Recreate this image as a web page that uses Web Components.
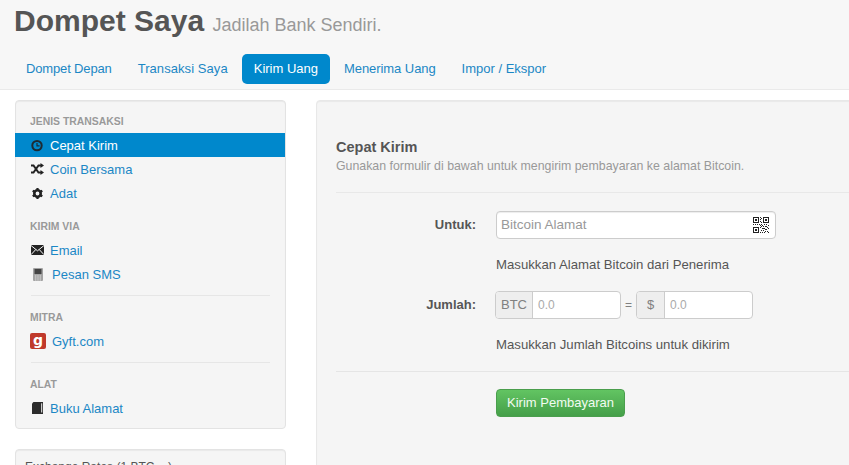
<!DOCTYPE html>
<html>
<head>
<meta charset="utf-8">
<title>Dompet Saya</title>
<style>
  html, body { margin: 0; height: 465px; overflow: hidden; background: #fff; }
  body { font: 14px/20px "Liberation Sans", Arial, sans-serif; color: #555; }
  .row { display: flex; gap: 30px; padding: 10px 0 0 15px; width: 1000px; }
</style>
</head>
<body>
<wallet-header title-text="Dompet Saya" tagline="Jadilah Bank Sendiri."></wallet-header>
<div class="row">
  <side-bar></side-bar>
  <send-form></send-form>
</div>

<script>
class WalletHeader extends HTMLElement {
  constructor() {
    super();
    this.attachShadow({ mode: 'open' });
    // second value is a small letter-spacing so the tabs land where the reference has them
    const tabs = [['Dompet Depan', -0.15], ['Transaksi Saya', 0.07], ['Kirim Uang', 0], ['Menerima Uang', -0.07], ['Impor / Ekspor', 0]];
    this.shadowRoot.innerHTML = `
      <style>
        :host { display: block; height: 89px; background: #f7f7f7; border-bottom: 1px solid #eaeaea; }
        h1 { margin: 0; padding: 0 0 0 14px; height: 54px; font-size: 30px; line-height: 42px; font-weight: bold; color: #555; white-space: nowrap; }
        small { font-size: 18px; font-weight: normal; color: #999; }
        nav { display: flex; gap: 2px; margin-left: 14px; }
        a { display: block; padding: 5px 12px; height: 20px; border-radius: 5px; color: #1b87c5; font-size: 13px; line-height: 20px; text-decoration: none; white-space: nowrap; }
        a.active { background: #0088cc; color: #fff; }
      </style>
      <h1>${this.getAttribute('title-text')} <small>${this.getAttribute('tagline')}</small></h1>
      <nav>${tabs.map(([t, s]) => `<a href="#" style="letter-spacing:${s}px" class="${t === 'Kirim Uang' ? 'active' : ''}">${t}</a>`).join('')}</nav>
    `;
  }
}
customElements.define('wallet-header', WalletHeader);

const ICONS = {
  clock: '<svg width="14" height="14" viewBox="0 0 14 14"><circle cx="6" cy="7.600" r="4.700" fill="none" stroke="#1d2a33" stroke-width="2"/><path d="M6 5v2.800h2.600" fill="none" stroke="#1d2a33" stroke-width="1.200"/></svg>',
  shuffle: '<svg width="14" height="14" viewBox="0 0 14 14"><path d="M0 3.500h2.500l5 7H10M0 10.500h2.500l5-7H10" fill="none" stroke="#222" stroke-width="2"/><path d="M9.500 1l3.500 2.500L9.500 6zM9.500 8l3.500 2.500L9.500 13z" fill="#222"/></svg>',
  cog: '<svg width="14" height="14" viewBox="0 0 14 14"><circle cx="6.500" cy="7.500" r="3.200" fill="none" stroke="#222" stroke-width="2.600"/><path d="M6.500 2v2M6.500 11v2M1.700 4.700l1.800 1M9.500 9.300l1.800 1M1.700 10.300l1.800-1M9.500 5.700l1.800-1" stroke="#222" stroke-width="2.200"/></svg>',
  mail: '<svg width="14" height="14" viewBox="0 0 14 14"><rect x="0" y="2" width="13" height="10" fill="#222"/><path d="M0 2.500l6.500 5.300L13 2.500M0 11.700l4.800-5.200M13 11.700L8.200 6.500" fill="none" stroke="#f5f5f5" stroke-width="1"/></svg>',
  phone: '<svg width="14" height="16" viewBox="0 0 14 16"><rect x="2" y="2" width="10" height="13" rx="1" fill="#a3a3a3"/><rect x="3.500" y="3" width="7" height="5" fill="#444"/><path d="M4 10h6M4 12h6M4 14h6" stroke="#dcdcdc" stroke-width="1" stroke-dasharray="1.400 .9"/></svg>',
  book: '<svg width="14" height="14" viewBox="0 0 14 14"><path d="M1 2.500 2.500 1H12V13H1z" fill="#2b2b2b"/><path d="M10.700 2.300V11.500" stroke="#eee" stroke-width="1"/></svg>'
};

class SideBar extends HTMLElement {
  constructor() {
    super();
    this.attachShadow({ mode: 'open' });
    this.shadowRoot.innerHTML = `
      <style>
        :host { display: block; width: 271px; flex: none; }
        .well { box-sizing: border-box; width: 271px; background: #f5f5f5; border: 1px solid #e3e3e3; border-radius: 4px; box-shadow: inset 0 1px 1px rgba(0,0,0,.05); }
        .nav { height: 329px; padding: 10px 0 0; }
        .head { padding: 4px 14px 0; height: 22px; font-size: 10.400px; line-height: 14px; font-weight: bold; color: #999; text-transform: uppercase; box-sizing: border-box; text-shadow: 0 1px 0 rgba(255,255,255,.5); }
        a { box-sizing: border-box; display: flex; align-items: center; height: 24px; padding: 2px 0 0 15px; color: #1b87c5; text-decoration: none; font-size: 13px; line-height: 20px; }
        a svg { flex: none; margin: -2px 5px 0 0; }
        a.active { background: #0088cc; color: #fff; margin-left: -1px; padding-left: 16px; }
        .gap { height: 11px; }
        hr { height: 1px; border: 0; background: #e6e6e6; margin: 9px 15px 11px; }
        .badge { flex: none; width: 16px; height: 16px; margin: -2px 6px 0 -1px; border-radius: 2px; background: #c0392b; color: #fff; font: bold 14px/14px "DejaVu Sans", sans-serif; text-align: center; }
        .rates { margin-top: 20px; height: 60px; padding: 7px 9px; font-size: 12px; color: #555; border-radius: 4px 4px 0 0; }
      </style>
      <div class="well nav">
        <div class="head">Jenis Transaksi</div>
        <a class="active" href="#">${ICONS.clock}Cepat Kirim</a>
        <a href="#">${ICONS.shuffle}Coin Bersama</a>
        <a href="#">${ICONS.cog}Adat</a>
        <div class="gap"></div>
        <div class="head">Kirim Via</div>
        <a href="#">${ICONS.mail}Email</a>
        <a href="#">${ICONS.phone}<span style="margin-left:2px">Pesan SMS</span></a>
        <hr>
        <div class="head">Mitra</div>
        <a href="#"><span class="badge">g</span>Gyft.com</a>
        <hr>
        <div class="head">Alat</div>
        <a href="#">${ICONS.book}Buku Alamat</a>
      </div>
      <div class="well rates">Exchange Rates (1 BTC = )</div>
    `;
  }
}
customElements.define('side-bar', SideBar);

class SendForm extends HTMLElement {
  constructor() {
    super();
    this.attachShadow({ mode: 'open' });
    // qr glyph on a 16px grid: three finder squares and some noise
    const finder = (x, y) => `<path d="M${x} ${y}h6v6h-6z M${x + 1} ${y + 1}v4h4v-4z" fill-rule="evenodd"/><rect x="${x + 2}" y="${y + 2}" width="2" height="2"/>`;
    const noise = [[7,0],[7,2],[8,1],[7,4],[8,5],[0,7],[2,7],[4,7],[6,7],[8,7],[7,8],[9,8],[11,7],[13,7],[15,8],[10,9],[12,9],[14,10],[7,10],[9,11],[11,11],[13,12],[8,13],[10,13],[12,14],[14,14],[7,15],[9,15],[11,15],[15,15],[13,9],[15,11],[10,11],[12,12],[8,9]];
    const qr = finder(0, 0) + finder(10, 0) + finder(0, 10) + noise.map(([x, y]) => `<rect x="${x}" y="${y}" width="1" height="1"/>`).join('');
    this.shadowRoot.innerHTML = `
      <style>
        :host { display: block; flex: none; width: 640px; }
        .well { box-sizing: border-box; height: 370px; background: #f5f5f5; border: 1px solid #e8e8e8; border-radius: 4px; padding: 37px 19px 0; box-shadow: inset 0 1px 1px rgba(0,0,0,.05); }
        h3 { margin: 0; font-size: 14.500px; line-height: 18px; color: #555; font-weight: bold; }
        .sub { box-sizing: border-box; height: 37px; padding-top: 2px; font-size: 12.350px; line-height: 17px; color: #999; border-bottom: 1px solid #e8e8e8; }
        .ctl { display: flex; align-items: center; margin-top: 18px; }
        label { width: 140px; text-align: right; font-weight: bold; font-size: 13px; color: #555; margin-right: 20px; flex: none; }
        .addr { box-sizing: border-box; width: 280px; height: 28px; display: flex; align-items: center; justify-content: space-between; background: #fff; border: 1px solid #ccc; border-radius: 4px; padding: 0 6px 0 4px; color: #999; font-size: 13.500px; box-shadow: inset 0 1px 1px rgba(0,0,0,.075); }
        .help { margin: 16px 0 0 160px; height: 20px; font-size: 13.200px; line-height: 20px; color: #555; }
        .grp { display: flex; height: 28px; box-sizing: border-box; border: 1px solid #ccc; border-radius: 4px; overflow: hidden; background: #fff; color: #aaa; }
        .grp b { font-weight: normal; background: #eee; border-right: 1px solid #ccc; display: flex; align-items: center; justify-content: center; font-size: 13px; color: #808080; }
        .grp span { display: flex; align-items: center; padding-left: 5px; font-size: 12px; }
        .eq { width: 15px; text-align: center; color: #808080; font-size: 12px; }
        .foot { margin-top: 16px; border-top: 1px solid #e5e5e5; padding: 17px 0 0 160px; }
        button { display: block; box-sizing: border-box; width: 129px; height: 28px; border: 1px solid #4a9e4d; border-radius: 4px; background: linear-gradient(#62c462, #459f49); color: #f2fbf2; font: 13px/20px "Liberation Sans", Arial, sans-serif; padding: 0; }
      </style>
      <div class="well">
        <h3>Cepat Kirim</h3>
        <div class="sub">Gunakan formulir di bawah untuk mengirim pembayaran ke alamat Bitcoin.</div>
        <div class="ctl">
          <label>Untuk:</label>
          <div class="addr">Bitcoin Alamat<svg width="16" height="16" viewBox="0 0 16 16" fill="#222">${qr}</svg></div>
        </div>
        <div class="help">Masukkan Alamat Bitcoin dari Penerima</div>
        <div class="ctl" style="margin-top:16px">
          <label style="margin-right:19px">Jumlah:</label>
          <div class="grp" style="width:126px"><b style="width:36px">BTC</b><span>0.0</span></div>
          <div class="eq">=</div>
          <div class="grp" style="width:117px"><b style="width:27px">$</b><span>0.0</span></div>
        </div>
        <div class="help">Masukkan Jumlah Bitcoins untuk dikirim</div>
        <div class="foot"><button>Kirim Pembayaran</button></div>
      </div>
    `;
  }
}
customElements.define('send-form', SendForm);
</script>
</body>
</html>
